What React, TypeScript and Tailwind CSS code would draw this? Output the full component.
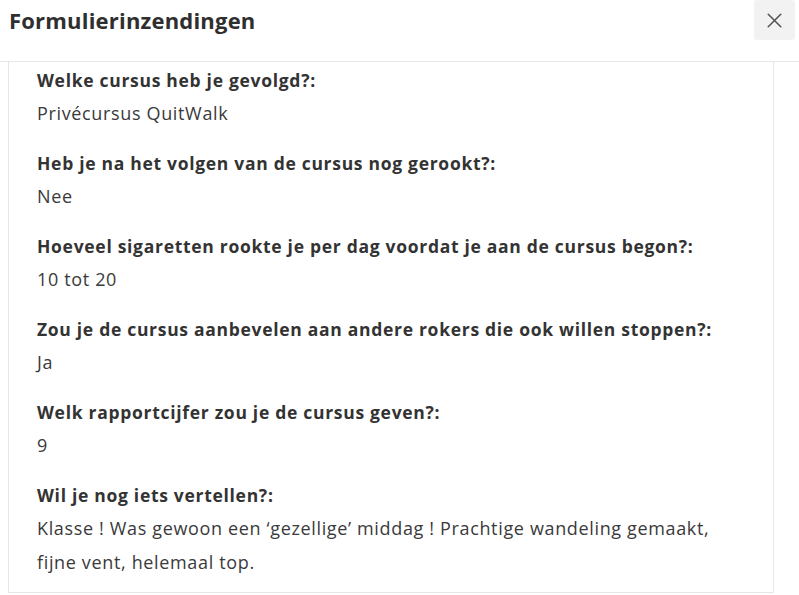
import { X } from 'lucide-react';

const entries = [
  { q: 'Welke cursus heb je gevolgd?:', a: 'Privécursus QuitWalk' },
  { q: 'Heb je na het volgen van de cursus nog gerookt?:', a: 'Nee' },
  { q: 'Hoeveel sigaretten rookte je per dag voordat je aan de cursus begon?:', a: '10 tot 20' },
  { q: 'Zou je de cursus aanbevelen aan andere rokers die ook willen stoppen?:', a: 'Ja' },
  { q: 'Welk rapportcijfer zou je de cursus geven?:', a: '9' },
  {
    q: 'Wil je nog iets vertellen?:',
    a: 'Klasse ! Was gewoon een ‘gezellige’ middag ! Prachtige wandeling gemaakt, fijne vent, helemaal top.',
  },
];

export default function App() {
  return (
    <div className="w-[799px] h-[595px] bg-white text-[#333] overflow-hidden" style={{ fontFamily: '"Open Sans", sans-serif' }}>
      <div className="h-[61px] flex items-start justify-between">
        <h1 className="pl-[9px] pt-[4px] text-[22px] leading-[32px] font-bold tracking-[0.2px] text-[#2f2f2f]">
          Formulierinzendingen
        </h1>
        <button className="mr-[4px] w-[41px] h-[40px] bg-[#f2f2f2] rounded-[3px] flex items-center justify-center text-[#555]">
          <X size={25} strokeWidth={1.5} />
        </button>
      </div>
      <div className="border-t border-[#e6e6e6]">
        <div className="ml-[8px] w-[766px] border-x border-b border-[#e6e6e6] pl-[28px] pr-6 pt-[2px] pb-[13px]">
          {entries.map((e, i) => (
            <div key={i} className={i === entries.length - 1 ? '' : 'mb-[17px]'}>
              <p className="text-[17.5px] leading-[32px] font-bold tracking-[0.7px] text-[#333]">{e.q}</p>
              <p className="text-[18px] leading-[34px] tracking-[0.65px] text-[#3a3a3a]">{e.a}</p>
            </div>
          ))}
        </div>
      </div>
    </div>
  );
}
